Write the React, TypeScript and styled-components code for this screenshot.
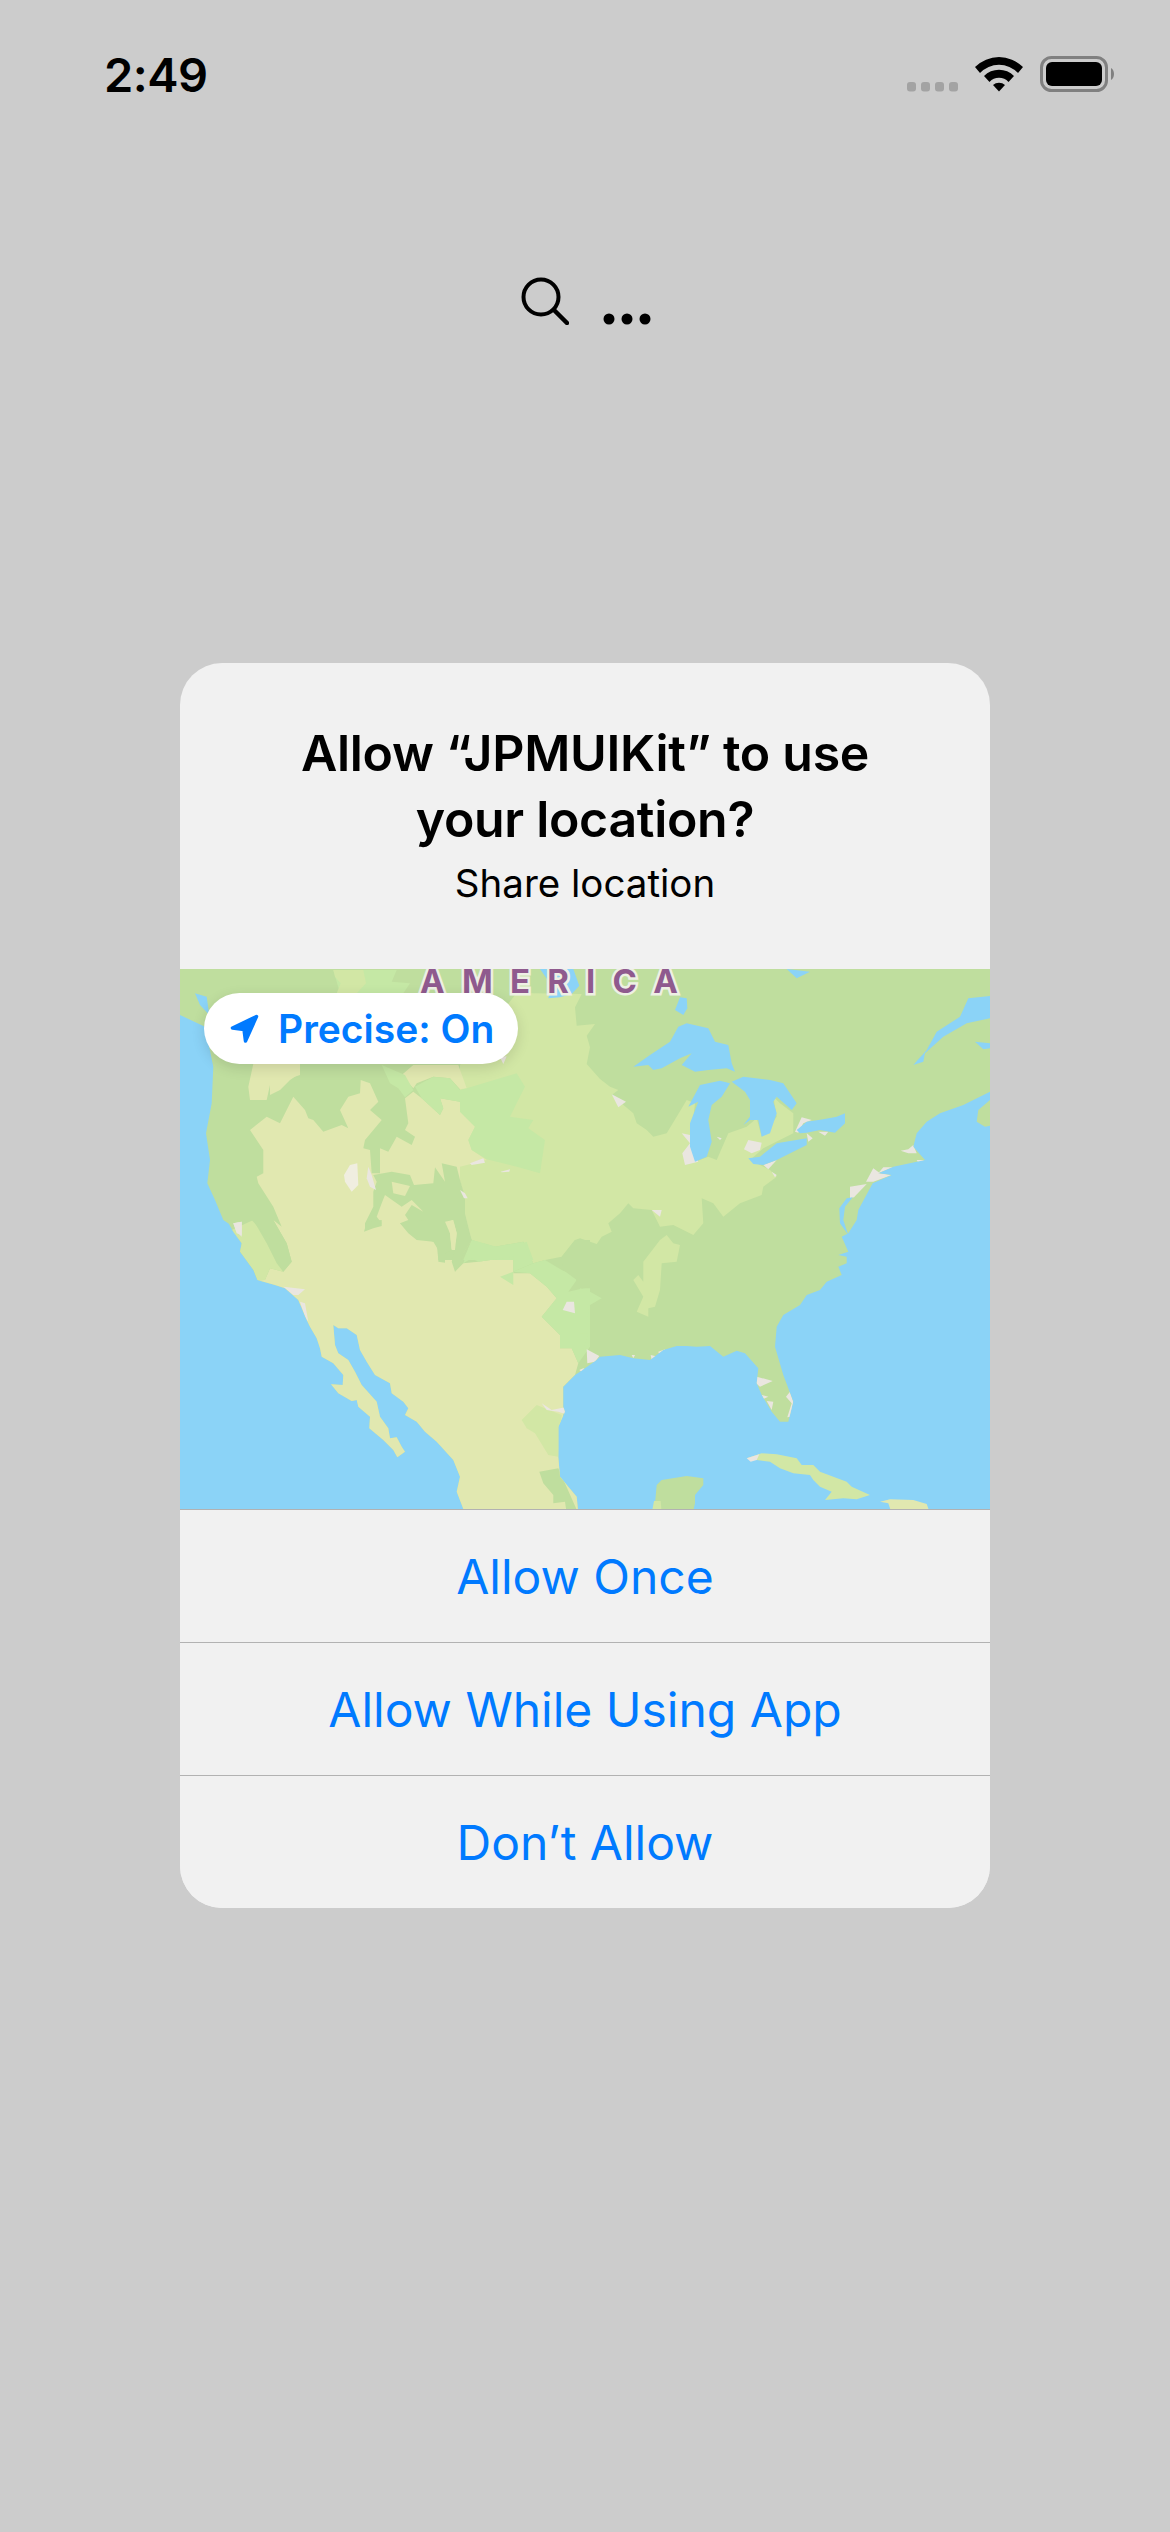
import React from "react";
import styled, { createGlobalStyle } from "styled-components";

const Global = createGlobalStyle`
  html, body { margin: 0; padding: 0; background: #cccccc; }
  * { box-sizing: border-box; }
`;

const Page = styled.div`
  width: 1170px;
  height: 2532px;
  background: #cccccc;
  font-family: Inter, "Liberation Sans", sans-serif;
  overflow: hidden;
`;

const StatusBar = styled.header`
  height: 120px;
  padding: 55px 55px 0 104px;
  display: flex;
  justify-content: space-between;
  align-items: flex-start;
`;

const Time = styled.div`
  font-size: 47px;
  font-weight: 600;
  line-height: 40px;
  letter-spacing: -0.5px;
  color: #000;
`;

const StatusIcons = styled.svg`
  display: block;
  width: 210px;
  height: 38px;
`;

const Toolbar = styled.div`
  margin-top: 157px;
  height: 48px;
  padding-left: 2px;
  display: flex;
  justify-content: center;
  align-items: flex-end;
  gap: 34px;
`;

const ToolIcon = styled.svg`
  display: block;
`;

const Dialog = styled.section`
  width: 810px;
  margin: 338px 0 0 180px;
  border-radius: 42px;
  background: #f1f1f1;
  overflow: hidden;
`;

const Header = styled.div`
  height: 306px;
  padding-top: 57px;
  text-align: center;
`;

const Title = styled.h1`
  margin: 0;
  font-size: 50px;
  font-weight: 600;
  line-height: 66px;
  letter-spacing: -0.3px;
  color: #000;
`;

const Subtitle = styled.p`
  margin: 8px 0 0;
  font-size: 38.5px;
  font-weight: 400;
  line-height: 46px;
  color: #000;
`;

const MapArea = styled.div`
  position: relative;
  height: 540px;
`;

const MapSvg = styled.svg`
  display: block;
  width: 810px;
  height: 540px;
`;

const MapLabel = styled.text`
  font-family: Inter, "Liberation Sans", sans-serif;
  font-size: 33px;
  font-weight: 700;
  fill: #8f5a8e;
  stroke: #eef0e4;
  stroke-width: 5px;
  paint-order: stroke;
`;

const PrecisePill = styled.div`
  position: absolute;
  left: 24px;
  top: 24px;
  width: 314px;
  height: 71px;
  padding-left: 26px;
  display: flex;
  align-items: center;
  gap: 19px;
  border-radius: 36px;
  background: #fff;
  box-shadow: 0 4px 14px rgba(0, 0, 0, 0.12);
  color: #007aff;
  font-size: 39px;
  font-weight: 600;
  white-space: nowrap;
`;

const ActionButton = styled.button`
  display: flex;
  align-items: center;
  justify-content: center;
  width: 100%;
  height: 133px;
  padding: 0;
  border: 0;
  border-top: 1.5px solid #b2b2b2;
  background: #f1f1f1;
  color: #007aff;
  font-family: inherit;
  font-size: 48px;
  font-weight: 400;
`;

const OCEAN = "#8bd3f7";
const DARK = "#bfde9e";
const MID = "#d2e7a5";
const LIGHT = "#c5e8a5";
const YELLOW = "#e1e8b0";
const URBAN = "#eae6e0";
const SALT = "#f0eee0";

const at = (ox: number, oy: number) => (s: string) =>
  s
    .trim()
    .split(/\s+/)
    .map((p) => {
      const [x, y] = p.split(",").map(Number);
      return `${(ox + x / 3).toFixed(1)},${(oy + y / 3).toFixed(1)}`;
    })
    .join(" ");

const NW = at(170, 960);
const NE = at(580, 960);
const SW = at(170, 1220);
const SE = at(580, 1220);
const MIDDLE = at(270, 1060);
const TOP = at(480, 969);

const landOutline = [
  "180,960 990,960",
  NE("1230,395 1150,435 1080,460 1040,485 1010,520 1000,560 1035,600 940,620 895,640 935,645 878,670 835,750 830,780"),
  SE("805,40 785,50 805,95 775,105 800,110 800,130 775,140 785,165 740,185 720,210 680,225 660,255 610,285 590,320 585,380 610,465 625,505 640,545 625,605 600,605 575,575 545,525 530,490 535,445 495,400 470,392 430,410 390,378 350,380 320,378 290,378 250,390 210,420 160,415 120,405 60,410 50,420 0,455"),
  SW("1215,465 1180,500 1180,560 1185,575 1165,620 1165,710 1170,770 1220,830 1225,880 885,880 860,815 870,770 850,720 800,665 765,635 740,605 705,585 715,565 700,545 665,520 660,490 615,465 590,425 570,390 560,345 530,325 505,325 490,315 495,375 505,400 535,420 555,455 575,495 620,545 630,590 655,625 660,655 680,652 695,680 705,695 682,712 670,690 640,660 598,625 600,590 565,560 560,540 545,543 505,520 483,493 518,495 520,465 490,430 455,410 450,385 440,355 420,320 410,300 385,240 345,205 315,195 262,180 250,150 210,95 215,70 190,35 170,0"),
  NW("190,800 160,780 135,720 112,670 120,600 108,520 125,430 130,320 105,200 30,165"),
  "180,960",
].join(" ");

type Shape = { fill: string; pts: string };

const landShapes: Shape[] = [
  // central lowlands
  {
    fill: MID,
    pts: [
      TOP("110,72 305,75 285,115 290,170 345,165 320,200 330,235 320,285 360,330"),
      NE("90,380 115,390 95,405 160,460 170,490 200,510 220,530 260,520 290,470 320,420 345,430 330,560 345,605 385,590 410,600 445,520 500,500 530,475 545,530 590,470 580,410 600,430 640,460 640,520 550,565 510,600 570,630 590,650 550,680 545,705 480,730 430,770 400,730 365,715 370,790 340,825 280,795 240,800 215,750 160,745 145,730 120,760 85,790"),
      SE("95,35 65,50 50,72 0,55"),
      SW("1215,60 1175,110 1125,120 1090,130 1060,65 975,80 905,60 880,0"),
      MIDDLE("585,460 585,410 570,360 570,320 540,310 570,155 570,15"),
    ].join(" "),
  },
  { fill: LIGHT, pts: NW("490,30 580,30 680,30 665,65 720,70 700,100 590,100 510,100") },
  { fill: MID, pts: NW("490,30 580,30 588,70 560,100 500,100 512,70 495,50") },
  // dry southwest
  {
    fill: YELLOW,
    pts: [
      NW("240,510 290,470 330,490"),
      MIDDLE("70,110 105,150 115,175 130,180 160,215 215,195 235,205 210,150 235,110 270,100 272,60 300,70 325,125 300,150 335,180 285,240 280,265 300,270 305,340 330,340 330,265 355,275 380,230 425,255 435,230 405,210 415,190 405,115 430,95 455,115 510,165 520,145 510,115 570,125 570,155 615,200 595,240 605,270 650,300 570,320 570,360 585,410 585,460 605,540 565,600"),
      SW("855,155 880,130 925,125 1030,110 1030,195 990,170 985,160 1080,160 1130,200 1160,235 1115,290 1170,345 1170,385 1205,385 1225,430 1215,465 1180,500 1180,600 1250,900 -50,900 -50,200 285,180 300,145 340,155 365,125 350,70 310,0"),
      NW("335,800 310,740 265,670 260,650 280,640 280,570"),
    ].join(" "),
  },
  { fill: YELLOW, pts: NW("250,312 390,312 390,345 300,375 290,420 240,420 235,380") },
  { fill: YELLOW, pts: MIDDLE("0,15 90,15 90,40 60,60 30,90 0,105") },
  { fill: YELLOW, pts: MIDDLE("395,45 430,15 565,15 590,85 570,88 540,55 490,50 440,70 430,85") },
  { fill: LIGHT, pts: MIDDLE("335,15 405,45 430,90 405,112 385,85 360,70") },
  { fill: LIGHT, pts: MIDDLE("435,80 490,50 540,55 570,90 590,85 740,40 765,80 745,120 720,170 790,180 775,205 825,240 810,340 740,320 650,298 605,270 595,240 615,200 570,155 570,125 510,115 520,145 510,165 455,115") },
  { fill: LIGHT, pts: MIDDLE("580,600 605,540 680,560 730,560 770,545 790,600") },
  { fill: LIGHT, pts: SW("905,60 975,80 1060,65 1090,130 1030,155 1030,110 925,125 905,115 880,130") },
  { fill: LIGHT, pts: SW("990,170 1030,155 1090,130 1125,120 1175,150 1220,170 1215,205 1260,205 1260,380 1225,430 1205,385 1170,385 1170,345 1115,290 1160,235 1130,200 1080,160 1030,155 1030,195") },
  { fill: DARK, pts: SW("1175,110 1215,60 1260,60 1260,200 1195,215 1220,180 1180,150") },
  { fill: MID, pts: SW("185,30 250,0 290,70 320,130 340,155 300,145 285,180 262,180 250,150 210,95") },
  { fill: DARK, pts: SW("245,0 310,0 350,70 365,125 340,155 325,130 340,80 290,50") },
  { fill: DARK, pts: MIDDLE("310,345 365,335 420,345 432,375 490,370 495,322 525,365 515,310 560,320 570,360 585,410 585,460 605,540 565,600 505,600 500,550 420,515 390,490 415,480 405,465 425,435 460,455 425,420 395,440 345,405 335,430 320,470 335,490 285,512 285,490 310,440 310,395 320,365") },
  { fill: YELLOW, pts: MIDDLE("365,365 420,378 405,408 370,400") },
  { fill: YELLOW, pts: MIDDLE("525,490 548,480 565,525 550,565 520,580 537,555 525,510") },
  { fill: DARK, pts: SW("690,10 770,0 830,0 840,40 845,90 825,100 825,128 805,125 805,90 790,65 740,60 715,40") },
  { fill: DARK, pts: SW("850,0 880,0 905,60 880,100 870,130 855,155 845,125 855,90 860,40") },
  { fill: YELLOW, pts: SW("825,5 850,0 860,40 855,90 845,90 840,40") },
  { fill: DARK, pts: SW("582,35 590,5 635,0 635,18 610,25") },
  { fill: MID, pts: SW("1055,600 1100,555 1175,585 1165,710 1135,705 1095,640 1070,625") },
  { fill: DARK, pts: SW("1108,755 1165,745 1225,880 1190,880 1185,845 1150,850 1150,825 1120,790") },
  // appalachians
  { fill: MID, pts: SE("260,45 280,70 300,75 290,125 245,130 240,210 225,260 205,265 205,290 170,275 190,230 160,180 175,165 190,185 190,125 240,60") },
  { fill: LIGHT, pts: SE("0,205 30,215 65,235 30,255 22,290 0,290") },
  { fill: LIGHT, pts: SE("0,340 25,340 10,385 0,390") },
  // cities
  ...[
    NE("95,403 138,425 115,442"),
    NE("305,520 330,525 330,550 355,605 315,615 307,580 330,550"),
    NE("410,530 425,535 420,540"),
    NE("505,540 545,548 540,570 515,580 492,568"),
    NE("665,472 695,480 670,490 655,518 645,515"),
    NE("680,520 698,535 685,545"),
    NE("715,515 745,515 735,527"),
    NE("550,615 590,600 565,628"),
    NE("575,635 590,645 585,652"),
    NE("215,750 245,750 240,770"),
    NE("810,680 860,672 822,712 810,715"),
    NE("858,665 880,625 900,640 935,645 880,665"),
    NE("895,640 910,622 940,622"),
    NE("962,572 985,568 1000,555 1010,580 985,580"),
    NE("1010,600 1035,600 1015,608"),
    MIDDLE("295,320 305,345 318,390 300,380 290,355"),
    MIDDLE("600,310 640,295 645,308 605,315"),
    MIDDLE("570,390 585,400 593,415 582,415"),
    MIDDLE("692,335 720,328 718,335 695,337"),
    TOP("60,265 80,262 70,285"),
    NW("190,790 215,785 215,825 200,820"),
    SW("190,10 215,5 215,50 200,35"),
    SW("340,200 405,208 385,225 370,225"),
    SW("390,245 405,250 415,305 405,290"),
    SW("1178,270 1190,245 1212,245 1215,280"),
    SW("1228,450 1240,445 1255,452 1240,460"),
    SW("1115,550 1145,570 1185,562 1185,582 1165,575 1130,570"),
    SE("20,388 58,408 45,425 22,430"),
    SE("0,450 20,452 10,460"),
    SE("530,470 578,483 540,500 528,490"),
    SE("545,525 565,530 550,537"),
    SE("560,543 580,545 575,570"),
    SE("618,530 630,515 640,545 632,590 622,592 635,550"),
    SE("155,405 165,405 160,415"),
    SE("212,405 235,410 215,422"),
    SE("235,395 255,388 240,412"),
  ].map((pts) => ({ fill: URBAN, pts })),
  { fill: SALT, pts: MIDDLE("222,345 240,315 262,310 265,375 245,395 225,365") },
];

const lakes: string[] = [
  NW("75,100 110,110 118,165 90,135"),
  NE("160,320 210,285 270,245 295,200 320,190 385,205 405,245 445,255 455,310 465,335 440,325 385,330 345,335 305,315 335,280 300,295 245,325 220,330 205,315"),
  NE("325,440 360,375 420,362 450,370 425,410 395,435 385,480 395,545 380,590 345,605 330,560 330,490 355,425"),
  NE("455,365 490,350 570,360 610,370 650,430 635,450 590,410 580,425 590,460 570,520 545,530 535,480 510,480 490,495 510,470 510,420 495,395"),
  NE("650,510 680,485 730,478 770,470 795,460 795,490 765,518 720,510 680,518 660,520"),
  NE("505,595 540,590 590,550 680,535 680,555 590,600 550,615 520,612"),
  NE("285,150 300,112 320,115 322,145 310,165"),
  NE("620,27 690,35 650,55"),
  NE("1000,315 1040,270 1070,215 1140,170 1165,115 1230,108 1230,175 1160,190 1090,230 1035,280 1030,305"),
  NE("1185,245 1230,250 1230,265 1210,268"),
  NE("800,715 818,712 795,740 790,780 805,825 780,790 778,745"),
  TOP("180,0 280,0 298,50 275,75 240,85 205,88 215,50"),
];

const islands: Shape[] = [
  { fill: DARK, pts: NE("1230,420 1195,450 1190,485 1215,500 1240,495 1240,420") },
  { fill: MID, pts: SE("500,715 545,700 590,703 650,715 665,735 700,735 720,755 760,770 800,785 815,800 870,825 830,838 790,835 735,840 755,815 720,800 700,780 690,765 640,760 600,745 570,725 530,720") },
  { fill: URBAN, pts: SE("500,715 538,703 530,720 512,725") },
  { fill: YELLOW, pts: SE("900,845 930,838 1000,840 1040,852 1050,880 935,880 925,850") },
  { fill: DARK, pts: SE("215,880 225,850 230,795 245,780 320,768 370,775 370,795 345,825 345,850 338,880") },
  { fill: MID, pts: SE("215,880 222,843 242,843 245,880") },
];

function NorthAmericaMap() {
  return (
    <MapSvg viewBox="180 969 810 540" aria-label="Map of North America">
      <defs>
        <clipPath id="land-clip">
          <polygon points={landOutline} />
        </clipPath>
      </defs>
      <rect x="180" y="969" width="810" height="540" fill={OCEAN} />
      <g clipPath="url(#land-clip)">
        <rect x="170" y="960" width="830" height="560" fill={DARK} />
        {landShapes.map((s, i) => (
          <polygon key={i} points={s.pts} fill={s.fill} />
        ))}
      </g>
      {lakes.map((pts, i) => (
        <polygon key={i} points={pts} fill={OCEAN} />
      ))}
      {islands.map((s, i) => (
        <polygon key={i} points={s.pts} fill={s.fill} />
      ))}
      <MapLabel x="420" y="993" textLength="258" lengthAdjust="spacing">
        AMERICA
      </MapLabel>
    </MapSvg>
  );
}

export default function App() {
  return (
    <Page>
      <Global />
      <StatusBar>
        <Time>2:49</Time>
        <StatusIcons viewBox="0 0 210 38">
          {[2, 16, 30, 44].map((x) => (
            <rect key={x} x={x} y="27" width="9" height="9.5" rx="3" fill="#a3a3a3" />
          ))}
          <g transform="translate(70 0)">
            <path d="M0 12 A 34 34 0 0 1 48 12 L43 18 A 26 26 0 0 0 5 18 Z" fill="#000" />
            <path d="M9 21 A 21 21 0 0 1 39 21 L33.5 27 A 13 13 0 0 0 14.500 27 Z" fill="#000" />
            <path d="M18 30 A 9 9 0 0 1 30 30 L24 36.500 Z" fill="#000" />
          </g>
          <rect x="136.500" y="2.500" width="65" height="33" rx="10" fill="none" stroke="#808080" strokeWidth="3" />
          <rect x="141" y="7" width="56" height="24" rx="6" fill="#000" />
          <path d="M206 13 C 210 15 210 23 206 25 Z" fill="#808080" />
        </StatusIcons>
      </StatusBar>

      <Toolbar>
        <ToolIcon width="48" height="48" viewBox="0 0 48 48">
          <circle cx="20" cy="20" r="17.500" fill="none" stroke="#000" strokeWidth="4" />
          <path d="M33 33 L46 46" fill="none" stroke="#000" strokeWidth="4.500" strokeLinecap="round" />
        </ToolIcon>
        <ToolIcon width="48" height="12" viewBox="0 0 48 12">
          <circle cx="6" cy="6" r="5.500" fill="#000" />
          <circle cx="24" cy="6" r="5.500" fill="#000" />
          <circle cx="42" cy="6" r="5.500" fill="#000" />
        </ToolIcon>
      </Toolbar>

      <Dialog>
        <Header>
          <Title>
            Allow “JPMUIKit” to use
            <br />
            your location?
          </Title>
          <Subtitle>Share location</Subtitle>
        </Header>
        <MapArea>
          <NorthAmericaMap />
          <PrecisePill>
            <svg width="29" height="29" viewBox="0 0 29 29">
              <path
                d="M26.500 2.500 L2.500 14 L14 15.500 L15.500 27 Z"
                fill="#007aff"
                stroke="#007aff"
                strokeWidth="3.500"
                strokeLinejoin="round"
              />
            </svg>
            Precise: On
          </PrecisePill>
        </MapArea>
        <ActionButton>Allow Once</ActionButton>
        <ActionButton>Allow While Using App</ActionButton>
        <ActionButton>Don’t Allow</ActionButton>
      </Dialog>
    </Page>
  );
}
